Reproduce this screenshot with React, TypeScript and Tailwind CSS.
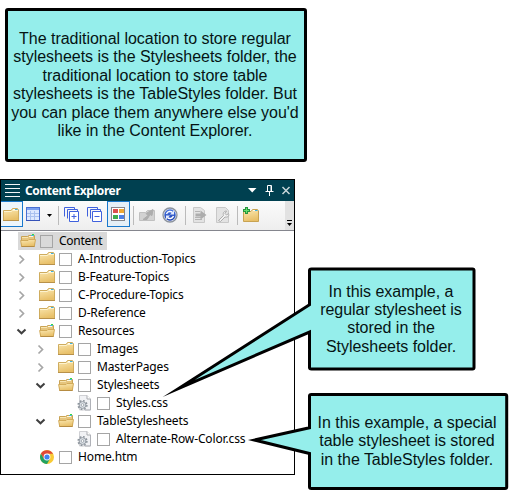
import React from 'react';

type RowKind = 'folder' | 'open' | 'checked' | 'css' | 'chrome';

type TreeRow = {
  label: string;
  kind: RowKind;
  pad: string;
  arrow?: 'right' | 'down';
};

const rows: TreeRow[] = [
  { label: 'A-Introduction-Topics', kind: 'folder', pad: 'pl-[15px]', arrow: 'right' },
  { label: 'B-Feature-Topics', kind: 'folder', pad: 'pl-[15px]', arrow: 'right' },
  { label: 'C-Procedure-Topics', kind: 'folder', pad: 'pl-[15px]', arrow: 'right' },
  { label: 'D-Reference', kind: 'folder', pad: 'pl-[15px]', arrow: 'right' },
  { label: 'Resources', kind: 'open', pad: 'pl-[15px]', arrow: 'down' },
  { label: 'Images', kind: 'folder', pad: 'pl-[34px]', arrow: 'right' },
  { label: 'MasterPages', kind: 'folder', pad: 'pl-[34px]', arrow: 'right' },
  { label: 'Stylesheets', kind: 'checked', pad: 'pl-[34px]', arrow: 'down' },
  { label: 'Styles.css', kind: 'css', pad: 'pl-[53px]' },
  { label: 'TableStylesheets', kind: 'checked', pad: 'pl-[34px]', arrow: 'down' },
  { label: 'Alternate-Row-Color.css', kind: 'css', pad: 'pl-[53px]' },
  { label: 'Home.htm', kind: 'chrome', pad: 'pl-[15px]' },
];

function Defs() {
  return (
    <svg width="0" height="0" className="absolute">
      <defs>
        <linearGradient id="gold" x1="0" y1="0" x2="0.3" y2="1">
          <stop offset="0" stopColor="#fbe9b4" />
          <stop offset="1" stopColor="#e8c069" />
        </linearGradient>
        <linearGradient id="blue" x1="0" y1="0" x2="0" y2="1">
          <stop offset="0" stopColor="#4a78e4" />
          <stop offset="1" stopColor="#1c3fae" />
        </linearGradient>
      </defs>
    </svg>
  );
}

function FolderShape() {
  return (
    <>
      <path d="M.5 13.500V3.500H8L9.500 1.500H14.500L15.500 3V13.500z" fill="url(#gold)" stroke="#cfac5e" />
      <path d="M1 4.500H8.500L9.500 3.500H15" fill="none" stroke="#fdf3cf" />
      <path d="M10 2.500h2" stroke="#fffdf2" />
      <path d="M12 2.500h2.500" stroke="#3fb0e0" />
      <path d="M0 13.500h16" stroke="#b8914a" />
    </>
  );
}

function Folder() {
  return (
    <svg width="17" height="16" viewBox="0 0 17 16" className="shrink-0">
      <FolderShape />
    </svg>
  );
}

function OpenFolder() {
  return (
    <svg width="17" height="16" viewBox="0 0 17 16" className="shrink-0">
      <path d="M1.500 13V3.500H7.500L9 2.500H14.500V13z" fill="#e6c57e" stroke="#c9a354" />
      <path d="M2 4.500h6" stroke="#f8e5b0" />
      <path d="M9 3.500h4" stroke="#fff9e0" />
      <path d="M11 2.500h3" stroke="#45b5dc" />
      <path d="M12 1.500h2" stroke="#3bdc3b" />
      <path d="M.6 7.500H8L9 6.500H15.500L14.300 13.500H1.700z" fill="url(#gold)" stroke="#cfa755" strokeWidth=".9" />
      <path d="M1.500 13.500h13" stroke="#b68c42" />
    </svg>
  );
}

function CssFile() {
  return (
    <svg width="16" height="16" viewBox="0 0 16 16" className="shrink-0">
      <path d="M2.500.5h7.500L13.500 4v11H2.500z" fill="#f1f2f5" stroke="#cfd0d4" />
      <path d="M10 .5V4h3.500" fill="#fff" stroke="#a9abb0" />
      <path d="M13.500 4v11H8" fill="none" stroke="#b0b2b8" />
      <circle cx="5.500" cy="10" r="3.400" fill="#dfe4ea" stroke="#949ba3" strokeWidth="1" />
      <circle cx="5.500" cy="10" r="4.400" fill="none" stroke="#8b939b" strokeWidth="1.500" strokeDasharray="1.728 1.728" />
      <circle cx="5.500" cy="10" r="1.400" fill="#fff" stroke="#8f979f" strokeWidth=".8" />
    </svg>
  );
}

function Chrome() {
  return (
    <svg width="16" height="16" viewBox="0 0 16 16" className="shrink-0">
      <circle cx="8" cy="8" r="7" fill="#f9cb35" />
      <path d="M1.940 4.500A7 7 0 0 0 8 15L11 9.700 8 8 5 9.700z" fill="#22a262" />
      <path d="M8 8L5 9.700 1.940 4.500A7 7 0 0 1 14.060 4.800H8z" fill="#df4937" />
      <circle cx="8" cy="8" r="3.400" fill="#fff" />
      <circle cx="8" cy="8" r="2.600" fill="#3f83ef" />
    </svg>
  );
}

function RowIcon({ kind }: { kind: RowKind }) {
  if (kind === 'folder') return <Folder />;
  if (kind === 'css') return <CssFile />;
  if (kind === 'chrome') return <Chrome />;
  return <OpenFolder />;
}

function Arrow({ dir }: { dir?: 'right' | 'down' }) {
  return (
    <svg width="12" height="12" viewBox="0 0 12 12" className="shrink-0">
      {dir === 'right' && <path d="M3.500 2.500L7.500 6.500 3.500 10.500" fill="none" stroke="#a6a6a6" strokeWidth="1.700" />}
      {dir === 'down' && <path d="M1.500 4.500L5.500 8.300 9.500 4.500" fill="none" stroke="#404040" strokeWidth="2" />}
    </svg>
  );
}

function CheckBox() {
  return <span className="size-[13px] shrink-0 border border-[#a5a5a5]" />;
}

function Header() {
  return (
    <div className="flex h-[21px] items-center bg-[#004050] text-white">
      <svg width="16" height="21" viewBox="0 0 16 21" className="ml-1">
        <path d="M0 4.500h15M0 8.500h15M0 12.500h15M0 16.500h15" stroke="#f2f6f7" />
      </svg>
      <span className="ml-1 whitespace-nowrap text-[12px] font-bold leading-[21px] tracking-[-0.38px]">Content Explorer</span>
      <svg width="46" height="21" viewBox="0 0 46 21" className="ml-auto">
        <path d="M0 8h8.500L4.200 12.500z" fill="#fff" />
        <path d="M19.500 11V5.500h4V11M17.500 11.500h8M21.500 11.500V16M23 6v5" stroke="#fff" fill="none" />
        <path d="M34.500 7l7 7M41.500 7l-7 7" stroke="#c7d5d9" strokeWidth="1.500" />
      </svg>
    </div>
  );
}

function Toolbar() {
  return (
    <div className="flex h-[30px] border-b border-[#85868e] bg-gradient-to-b from-[#fbfbfb] to-[#eeeeee]">
      <svg width="293" height="29" viewBox="0 0 293 29">
        <rect x="-.5" y=".5" width="22" height="25" fill="#edf5fb" stroke="#1878cc" />
        <g transform="translate(2 6)">
          <FolderShape />
        </g>
        <rect x="25.500" y="6.500" width="13" height="13" fill="#dce8ff" stroke="#4a6fd2" />
        <path d="M26 8h12" stroke="#7ba0f0" strokeWidth="2" />
        <path d="M26 12.500h12M26 15.500h12M29.500 10v9M33.500 10v9" stroke="#a9c1f0" />
        <path d="M25 19.500h14" stroke="#3552b8" />
        <path d="M46 13h5l-2.500 3z" fill="#000" />
        <path d="M57.500 5v19M132.500 5v19M184.500 5v19M236.500 5v19" stroke="#bbb" />
        <g stroke="#3f61dd" fill="#fff">
          <path d="M63.500 15.500v-9h10v2M66.500 17.500v-9h10v2" fill="none" />
          <path d="M68.500 10.500h9v10h-9zM70.500 15.500h5M73 13v5" />
          <path d="M86.500 15.500v-9h10v2M89.500 17.500v-9h10v2" fill="none" />
          <path d="M91.500 10.500h9v10h-9zM93.500 15.500h5" />
        </g>
        <rect x="106.500" y=".5" width="22" height="25" fill="#e5eff7" stroke="#1878cc" />
        <rect x="110.500" y="6.500" width="13" height="13" fill="#fff" stroke="#85858c" />
        <path d="M112 8h5v4h-5z" fill="#dc5050" />
        <path d="M118 8h5v4h-5z" fill="#f0a830" />
        <path d="M112 14h5v4h-5z" fill="#3fae50" />
        <path d="M118 14h5v4h-5z" fill="#4c80e6" />
        <g transform="translate(138 7)" fill="#d2d2d2" stroke="#c0c0c0">
          <path d="M.5 12.500v-8h6l2-2h7v10z" />
          <path d="M4 11.500l5-4-2-2 7-4-1 6-2-1-3 5z" fill="#adadad" stroke="#adadad" />
        </g>
        <circle cx="169" cy="14" r="7" fill="#e0e5ee" stroke="#8b929d" strokeWidth="1.300" />
        <circle cx="169" cy="14" r="5.700" fill="url(#blue)" />
        <path d="M165.500 13c1-3 4.500-3 6-1.500M172.500 15c-1 3-4.500 3-6 1.500" fill="none" stroke="#fff" strokeWidth="1.400" />
        <path d="M173 9.500v4h-4zM165 18.500v-4h4z" fill="#e4ecff" />
        <g stroke="#c8c8c8" fill="#e3e3e3">
          <path d="M192.500 6.500h7l4 3v12h-11z" />
          <path d="M194 10.500h5M194 16.500h7M194 18.500h7" stroke="#b4b4b4" />
          <path d="M194.500 12.500h5v-3l6 4.500-6 4.500v-3h-5z" fill="#adadad" stroke="none" />
          <path d="M215.500 6.500h9l3 3v12h-12z" />
          <path d="M217.500 19.500l5-5c-1-3 1-4.500 3-4.500l-1.500 2.500 1.500 1.500 2-1.500c1 3-1 4-3.500 3.500l-4.500 4.500z" fill="#f2f2f2" stroke="#adadad" />
        </g>
        <g transform="translate(242 7)">
          <path d="M.5 13.500V3.500H8L9.500 1.500H14.500L15.500 3V13.500z" fill="url(#gold)" stroke="#c8a352" />
          <path d="M10 2.500h2" stroke="#fffdf2" />
          <path d="M12 2.500h2.500" stroke="#3fb0e0" />
          <path d="M3.500-1v7M0 2.500h7" stroke="#26953d" strokeWidth="3" />
          <path d="M3.500 0v5M1 2.500h5" stroke="#65e16d" />
        </g>
        <path d="M284 0h9v29h-9z" fill="#e2e2e2" />
        <path d="M286 19.500h5" stroke="#000" />
        <path d="M286 22h5l-2.500 3z" fill="#000" />
      </svg>
    </div>
  );
}

type CalloutProps = { place: string; lines: string[]; width: number; height: number; path: string; textBox: string };

function Callout({ place, lines, width, height, path, textBox }: CalloutProps) {
  return (
    <div className={`absolute ${place}`}>
      <svg width={width} height={height} className="block">
        <path d={path} fill="#95eeeb" stroke="#000" strokeWidth="3" strokeMiterlimit="20" />
      </svg>
      <div className={`absolute text-center text-[16px] leading-[18.4px] tracking-[-0.03px] text-[#061414] ${textBox}`}>
        {lines.map((line) => (
          <div key={line} className="whitespace-nowrap">{line}</div>
        ))}
      </div>
    </div>
  );
}

export default function App() {
  return (
    <div className="relative h-[499px] w-[517px] overflow-hidden bg-white font-['Liberation_Sans',Arial,sans-serif]">
      <Defs />
      <div className="pl-[5px] pt-2">
        <div className="flex h-[154px] w-[302px] flex-col items-center rounded-[3px] border-[3px] border-black bg-[#95eeeb] pr-[2px] pt-[19px] text-[16px] leading-[18.4px] tracking-[-0.03px] text-[#061414]">
          {[
            'The traditional location to store regular',
            'stylesheets is the Stylesheets folder, the',
            'traditional location to store table',
            'stylesheets is the TableStyles folder. But',
            "you can place them anywhere else you'd",
            'like in the Content Explorer.',
          ].map((line) => (
            <div key={line} className="whitespace-nowrap">{line}</div>
          ))}
        </div>
      </div>

      <div className="mt-[17px] h-[296px] w-[295px] border border-black bg-white font-['Noto_Sans','Open_Sans',sans-serif]">
        <Header />
        <Toolbar />
        <div className="pt-px text-[12px] leading-[18px] tracking-[-0.13px] text-black">
          <div className="ml-[17px] flex h-[18px] w-[89px] items-center bg-[#d9d9d9] pl-[2px]">
            <OpenFolder />
            <span className="ml-[3px] flex"><CheckBox /></span>
            <span className="ml-1.5 tracking-[-0.25px]">Content</span>
          </div>
          {rows.map((row) => (
            <div key={row.label} className={`flex h-[18px] items-center ${row.pad}`}>
              <Arrow dir={row.arrow} />
              <span className="ml-[11px] flex w-5 shrink-0"><RowIcon kind={row.kind} /></span>
              <CheckBox />
              <span className="ml-1.5 whitespace-nowrap">{row.label}</span>
            </div>
          ))}
        </div>
      </div>

      <Callout
        place="left-[155px] top-[265px]"
        width={325}
        height={140}
        path="M156.500 4H317.500Q319 4 319 5.500V102.500Q319 104 317.500 104H156.500Q154.500 104 154.500 102.500V67L24 123.300 154.500 39.800V5.500Q154.500 4 156.500 4Z"
        textBox="left-[156px] top-[17.500px] w-[160px]"
        lines={['In this example, a', 'regular stylesheet is', 'stored in the', 'Stylesheets folder.']}
      />
      <Callout
        place="left-[240px] top-[390px]"
        width={275}
        height={105}
        path="M71.500 4.500H265Q266.700 4.500 266.700 6V97Q266.700 98.500 265 98.500H71.500Q69.500 98.500 69.500 97V63.500L14.500 50 69.500 37.700V6Q69.500 4.500 71.500 4.500Z"
        textBox="left-[72px] top-[24px] w-[190px]"
        lines={['In this example, a special', 'table stylesheet is stored', 'in the TableStyles folder.']}
      />
    </div>
  );
}
